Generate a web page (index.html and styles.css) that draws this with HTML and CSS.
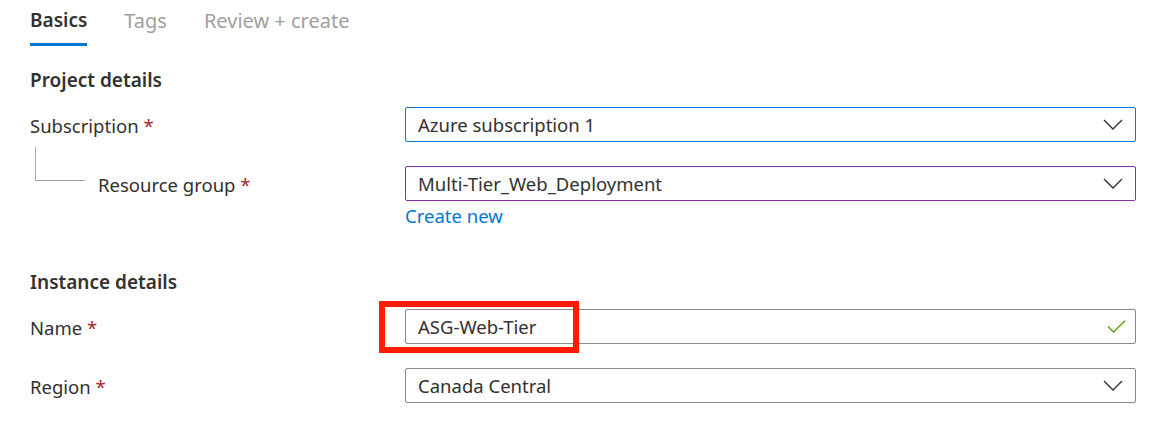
FILE: index.html
```html
<!DOCTYPE html>
<html>
<head>
<meta charset="utf-8">
<link rel="stylesheet" href="styles.css">
</head>
<body>
<nav class="tabs">
  <div class="tab active">Basics</div>
  <div class="tab">Tags</div>
  <div class="tab">Review + create</div>
</nav>

<h2 class="section first">Project details</h2>

<div class="row">
  <div class="label">Subscription <span class="req">*</span></div>
  <div class="field select focused">
    <span class="value">Azure subscription 1</span>
    <svg class="chev" width="20" height="11" viewBox="0 0 20 11"><path d="M1 1 L10 10 L19 1" fill="none" stroke="#323130" stroke-width="1.4"/></svg>
  </div>
</div>

<div class="row gap">
  <div class="label child">Resource group <span class="req">*</span></div>
  <div class="control">
    <div class="field select hover">
      <span class="value">Multi-Tier_Web_Deployment</span>
      <svg class="chev" width="20" height="11" viewBox="0 0 20 11"><path d="M1 1 L10 10 L19 1" fill="none" stroke="#323130" stroke-width="1.4"/></svg>
    </div>
    <a class="link">Create new</a>
  </div>
</div>

<h2 class="section second">Instance details</h2>

<div class="row">
  <div class="label">Name <span class="req">*</span></div>
  <div class="field text">
    <span class="value">ASG-Web-Tier</span>
    <svg class="check" width="19" height="13" viewBox="0 0 19 13"><path d="M1 6.5 L6.5 12 L18 0.8" fill="none" stroke="#57a300" stroke-width="1.4"/></svg>
    <div class="highlight"></div>
  </div>
</div>

<div class="row gap">
  <div class="label">Region <span class="req">*</span></div>
  <div class="field select">
    <span class="value">Canada Central</span>
    <svg class="chev" width="20" height="11" viewBox="0 0 20 11"><path d="M1 1 L10 10 L19 1" fill="none" stroke="#323130" stroke-width="1.4"/></svg>
  </div>
</div>
</body>
</html>
```

FILE: styles.css
```css
* { box-sizing: border-box; }
body {
  margin: 0;
  padding: 0 24px 0 30px;
  background: #ffffff;
  font-family: "Noto Sans", "Open Sans", sans-serif;
  font-size: 18.5px;
  color: #323130;
}
.tabs {
  display: flex;
  gap: 37px;
  height: 46px;
}
.tab {
  height: 46px;
  line-height: 41px;
  border-bottom: 3px solid transparent;
  color: #a19f9d;
  font-size: 20px;
}
.tab.active {
  color: #323130;
  font-size: 19px;
  font-weight: 600;
  border-bottom-color: #0078d4;
}
.section {
  margin: 0;
  font-size: 19px;
  font-weight: 600;
  line-height: 28px;
}
.section.first { margin-top: 20px; margin-bottom: 13px; }
.section.second { margin-top: 40px; margin-bottom: 13px; }
.row {
  display: grid;
  grid-template-columns: 375px 1fr;
  align-items: start;
}
.row.gap { margin-top: 24px; }
.label {
  height: 35px;
  line-height: 37px;
  position: relative;
}
.label.child { padding-left: 68px; }
.label.child::before {
  content: "";
  position: absolute;
  left: 5px;
  top: -19px;
  width: 49px;
  height: 33px;
  border-left: 1px solid #a8a8a8;
  border-bottom: 1px solid #a8a8a8;
}
.req { color: #a4262c; }
.control { display: flex; flex-direction: column; }
.field {
  position: relative;
  height: 35px;
  border: 1px solid #8a8886;
  border-radius: 2px;
  display: flex;
  align-items: center;
  padding: 0 12px;
}
.field.focused { border-color: #0078d4; }
.field.hover { border-color: #8a2da8; }
.value { flex: 1; line-height: 34px; }
.chev { flex: none; }
.check { flex: none; margin-right: -3px; }
.link {
  color: #0078d4;
  line-height: 24px;
  margin-top: 3px;
}
.highlight {
  position: absolute;
  left: -27px;
  top: -9px;
  width: 200px;
  height: 52px;
  border: 6px solid #ff1a00;
}
```
